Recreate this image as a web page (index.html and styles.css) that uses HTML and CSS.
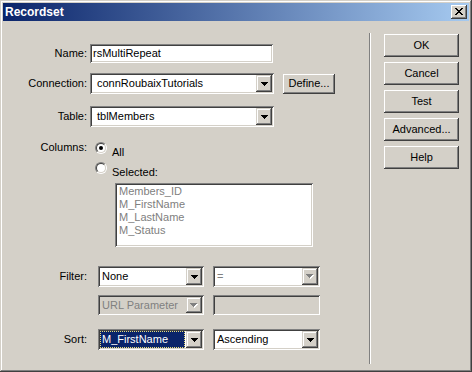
FILE: index.html
```html
<!DOCTYPE html>
<html lang="en">
<head>
	<meta charset="UTF-8">
	<title>Recordset</title>
	<link rel="stylesheet" href="styles.css">
</head>
<body>
	<div class="window">
		<!-- Title bar -->
		<div class="titlebar">
			<span class="title">Recordset</span>
			<span class="close-btn">
				<svg width="16" height="14" viewBox="0 0 16 14"><path fill="#000" d="M4 3h2v1h-2zM10 3h2v1h-2zM5 4h2v1h-2zM9 4h2v1h-2zM6 5h4v1h-4zM7 6h2v1h-2zM6 7h4v1h-4zM5 8h2v1h-2zM9 8h2v1h-2zM4 9h2v1h-2zM10 9h2v1h-2z"/></svg>
			</span>
		</div>

		<div class="content">
			<!-- Left side: the recordset form -->
			<div class="form">
				<div class="row row-name">
					<span class="label">Name:</span>
					<div class="field sunken name-field">rsMultiRepeat</div>
				</div>

				<div class="row row-connection">
					<span class="label">Connection:</span>
					<div class="combo sunken combo-wide">
						<span class="combo-value">connRoubaixTutorials</span>
						<span class="combo-btn"><svg width="7" height="4" viewBox="0 0 7 4"><path fill="#000" d="M0 0h7v1h-7zM1 1h5v1h-5zM2 2h3v1h-3zM3 3h1v1h-1z"/></svg></span>
					</div>
					<div class="btn define-btn">Define...</div>
				</div>

				<div class="row row-table">
					<span class="label">Table:</span>
					<div class="combo sunken combo-wide">
						<span class="combo-value">tblMembers</span>
						<span class="combo-btn"><svg width="7" height="4" viewBox="0 0 7 4"><path fill="#000" d="M0 0h7v1h-7zM1 1h5v1h-5zM2 2h3v1h-3zM3 3h1v1h-1z"/></svg></span>
					</div>
				</div>

				<div class="radio-row row-all">
					<span class="label">Columns:</span>
					<span class="radio"><span class="radio-inner"><span class="radio-dot"></span></span></span>
					<span class="radio-text">All</span>
				</div>
				<div class="radio-row row-selected">
					<span class="label"></span>
					<span class="radio"><span class="radio-inner"></span></span>
					<span class="radio-text">Selected:</span>
				</div>

				<div class="listbox sunken">
					<div>Members_ID</div>
					<div>M_FirstName</div>
					<div>M_LastName</div>
					<div>M_Status</div>
				</div>

				<div class="row row-filter">
					<span class="label">Filter:</span>
					<div class="combo sunken combo-left">
						<span class="combo-value">None</span>
						<span class="combo-btn"><svg width="7" height="4" viewBox="0 0 7 4"><path fill="#000" d="M0 0h7v1h-7zM1 1h5v1h-5zM2 2h3v1h-3zM3 3h1v1h-1z"/></svg></span>
					</div>
					<div class="combo sunken combo-right disabled">
						<span class="combo-value">=</span>
						<span class="combo-btn"><svg width="8" height="5" viewBox="0 0 8 5"><path fill="#fff" d="M1 1h7v1h-7zM2 2h5v1h-5zM3 3h3v1h-3zM4 4h1v1h-1z"/><path fill="#808080" d="M0 0h7v1h-7zM1 1h5v1h-5zM2 2h3v1h-3zM3 3h1v1h-1z"/></svg></span>
					</div>
				</div>

				<div class="row row-param">
					<span class="label"></span>
					<div class="combo sunken combo-left disabled greyed">
						<span class="combo-value">URL Parameter</span>
						<span class="combo-btn"><svg width="8" height="5" viewBox="0 0 8 5"><path fill="#fff" d="M1 1h7v1h-7zM2 2h5v1h-5zM3 3h3v1h-3zM4 4h1v1h-1z"/><path fill="#808080" d="M0 0h7v1h-7zM1 1h5v1h-5zM2 2h3v1h-3zM3 3h1v1h-1z"/></svg></span>
					</div>
					<div class="field sunken param-field greyed"></div>
				</div>

				<div class="row row-sort">
					<span class="label">Sort:</span>
					<div class="combo sunken combo-left">
						<span class="combo-value focused">M_FirstName</span>
						<span class="combo-btn"><svg width="7" height="4" viewBox="0 0 7 4"><path fill="#000" d="M0 0h7v1h-7zM1 1h5v1h-5zM2 2h3v1h-3zM3 3h1v1h-1z"/></svg></span>
					</div>
					<div class="combo sunken combo-right">
						<span class="combo-value">Ascending</span>
						<span class="combo-btn"><svg width="7" height="4" viewBox="0 0 7 4"><path fill="#000" d="M0 0h7v1h-7zM1 1h5v1h-5zM2 2h3v1h-3zM3 3h1v1h-1z"/></svg></span>
					</div>
				</div>
			</div>

			<div class="separator"></div>

			<!-- Right side: dialog buttons -->
			<div class="actions">
				<div class="btn action-btn">OK</div>
				<div class="btn action-btn">Cancel</div>
				<div class="btn action-btn">Test</div>
				<div class="btn action-btn">Advanced...</div>
				<div class="btn action-btn">Help</div>
			</div>
		</div>
	</div>
</body>
</html>
```

FILE: styles.css
```css
body {
	margin: 0;
	padding: 0;
	background-color: #d4d0c8;
	font-family: "Liberation Sans", Arial, sans-serif;
	font-size: 11px;
	color: #000;
}

/* Classic window frame */
.window {
	width: 472px;
	height: 372px;
	box-sizing: border-box;
	padding: 3px;
	background-color: #d4d0c8;
	box-shadow: inset -1px -1px #404040, inset 1px 1px #d4d0c8, inset -2px -2px #808080, inset 2px 2px #fff;
}

.titlebar {
	height: 18px;
	display: flex;
	align-items: center;
	justify-content: space-between;
	padding: 0 2px 0 2px;
	background: linear-gradient(to right, #0a246a, #a6caf0);
}

.title {
	color: #fff;
	font-weight: bold;
	font-size: 12px;
	line-height: 18px;
}

.close-btn {
	display: block;
	width: 16px;
	height: 14px;
	background-color: #d4d0c8;
	box-shadow: inset -1px -1px #404040, inset 1px 1px #fff, inset -2px -2px #808080, inset 2px 2px #d4d0c8;
}

.close-btn svg {
	display: block;
}

.content {
	display: flex;
}

/* Left form */
.form {
	width: 366px;
	display: flex;
	flex-direction: column;
	align-items: flex-start;
}

.row {
	display: flex;
	align-items: center;
}

.label {
	width: 84px;
	flex-shrink: 0;
	text-align: right;
	line-height: 13px;
}

.sunken {
	box-sizing: border-box;
	background-color: #fff;
	box-shadow: inset 1px 1px #808080, inset -1px -1px #fff, inset 2px 2px #404040, inset -2px -2px #d4d0c8;
}

.field {
	height: 19px;
	padding: 2px 3px;
	line-height: 15px;
	white-space: nowrap;
}

.row-name { margin-top: 23px; }
.name-field { width: 183px; margin-left: 3px; }

.combo {
	height: 21px;
	padding: 2px;
	display: flex;
}

.combo-value {
	flex: 1;
	line-height: 17px;
	padding-left: 3px;
	white-space: nowrap;
	overflow: hidden;
}

.combo-btn {
	width: 16px;
	height: 17px;
	flex-shrink: 0;
	display: flex;
	align-items: center;
	justify-content: center;
	background-color: #d4d0c8;
	box-shadow: inset -1px -1px #404040, inset 1px 1px #d4d0c8, inset -2px -2px #808080, inset 2px 2px #fff;
}

.combo-btn svg {
	display: block;
}

.combo-wide { width: 184px; margin-left: 3px; }
.combo-wide .combo-value { padding-left: 5px; }

.combo-left { width: 106px; margin-left: 11px; }
.combo-right { width: 107px; margin-left: 9px; }

.disabled .combo-value {
	color: #808080;
}

.greyed {
	background-color: #d4d0c8;
}

.param-field { width: 107px; height: 20px; margin-left: 9px; }

.focused {
	margin: 0 1px 0 0;
	padding-left: 2px;
	background-color: #0a246a;
	color: #fff;
	outline: 1px dotted #e6dc78;
	outline-offset: -1px;
}

.row-connection { margin-top: 10px; }
.row-table { margin-top: 12px; }

.btn {
	box-sizing: border-box;
	background-color: #d4d0c8;
	text-align: center;
	box-shadow: inset -1px -1px #404040, inset 1px 1px #fff, inset -2px -2px #808080, inset 2px 2px #d4d0c8;
}

.define-btn {
	width: 52px;
	height: 20px;
	line-height: 19px;
	margin-left: 9px;
	align-self: flex-start;
	margin-top: 1px;
}

/* Column radios */
.radio-row {
	display: flex;
	align-items: flex-start;
	height: 18px;
}

.row-all { margin-top: 14px; }
.row-selected { margin-top: 2px; }

.radio {
	width: 12px;
	height: 12px;
	box-sizing: border-box;
	margin: 1px 0 0 8px;
	border: 1px solid;
	border-color: #808080 #fff #fff #808080;
	border-radius: 50%;
}

.radio-inner {
	display: flex;
	align-items: center;
	justify-content: center;
	width: 10px;
	height: 10px;
	box-sizing: border-box;
	border: 1px solid;
	border-color: #404040 #d4d0c8 #d4d0c8 #404040;
	border-radius: 50%;
	background-color: #fff;
}

.radio-dot {
	width: 4px;
	height: 4px;
	border-radius: 50%;
	background-color: #000;
}

.radio-text {
	margin: 5px 0 0 5px;
	line-height: 13px;
}

.listbox {
	width: 198px;
	height: 64px;
	margin: 4px 0 0 112px;
	padding: 2px 4px;
	line-height: 13px;
	color: #808080;
}

.row-filter { margin-top: 19px; }
.row-param { margin-top: 8px; }
.row-param .combo { height: 20px; }
.row-param .combo-btn { height: 16px; }
.row-param .combo-value { line-height: 16px; }
.row-sort { margin-top: 14px; }

.combo-left .combo-value,
.combo-right .combo-value { padding-left: 2px; }

/* Etched separator and action buttons */
.separator {
	width: 0;
	height: 331px;
	margin-top: 12px;
	border-left: 1px solid #808080;
	border-right: 1px solid #fff;
}

.actions {
	margin: 13px 0 0 13px;
	display: flex;
	flex-direction: column;
	gap: 5px;
}

.action-btn {
	width: 75px;
	height: 23px;
	line-height: 23px;
}
```
